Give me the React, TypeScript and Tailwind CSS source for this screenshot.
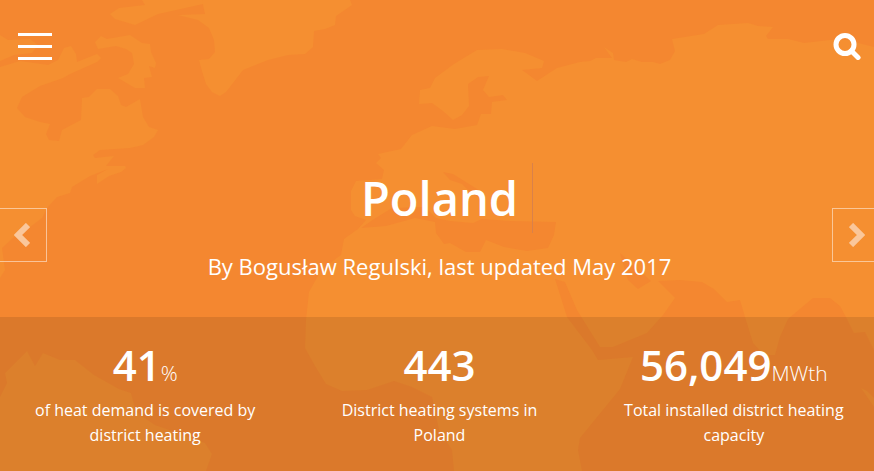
import React from "react";

type Stat = { value: string; unit?: string; label: string };

const stats: Stat[] = [
  { value: "41", unit: "%", label: "of heat demand is covered by district heating" },
  { value: "443", label: "District heating systems in Poland" },
  { value: "56,049", unit: "MWth", label: "Total installed district heating capacity" },
];

function WorldMap() {
  return (
    <svg
      className="absolute inset-0 h-full w-full"
      viewBox="0 0 874 471"
      preserveAspectRatio="xMidYMid slice"
      aria-hidden="true"
    >
      <g fill="#f58f31">
        {/* North America */}
        <path d="M0 67 L20 61 L48 65 L58 60 L64 48 L71 46 L76 54 L77 62 L97 54 L101 58 L97 62 L70 74 L63 78 L40 86 L22 97 L17 108 L25 117 L40 122 L50 124 L46 134 L49 140 L59 141 L62 130 L81 120 L82 98 L89 97 L97 89 L110 89 L118 96 L121 105 L126 107 L140 99 L143 117 L149 127 L158 130 L154 137 L143 145 L130 148 L100 150 L93 155 L95 158 L114 156 L106 166 L125 166 L126 168 L121 172 L109 176 L97 184 L97 175 L108 169 L90 176 L72 187 L70 193 L57 197 L47 208 L42 218 L30 227 L13 238 L2 248 L5 270 L0 278Z" />
        <path d="M0 35 L8 40 L30 39 L38 45 L32 53 L14 55 L0 61Z" />
        <path d="M95 42 L101 36 L107 39 L130 35 L142 43 L150 44 L151 52 L156 63 L155 68 L149 66 L152 77 L144 78 L145 88 L135 88 L118 78 L128 74 L134 64 L132 53 L126 49 L116 46 L98 49Z" />
        <path d="M142 0 L212 0 L203 4 L158 14 L135 25 L115 19 L110 14 L119 8 L145 5Z" />
        {/* Greenland */}
        <path d="M202 0 L350 0 L352 5 L336 16 L335 25 L325 29 L314 31 L313 47 L305 54 L288 55 L268 60 L243 70 L233 83 L226 92 L220 96 L212 92 L206 84 L202 71 L199 60 L209 59 L215 52 L214 40 L209 28 L198 20 L178 15 L205 14Z" />
        {/* Eurasia and Africa */}
        <path d="M874 47 L862 44 L848 40 L830 40 L804 43 L788 39 L768 39 L766 36 L773 27 L758 26 L748 23 L718 25 L704 34 L672 39 L675 51 L670 60 L660 64 L653 62 L642 62 L632 59 L626 62 L614 60 L613 53 L604 47 L612 58 L596 58 L590 61 L580 62 L557 68 L537 81 L522 70 L542 68 L544 61 L525 53 L502 49 L477 50 L454 64 L435 78 L430 88 L420 90 L419 104 L432 103 L443 111 L453 120 L462 115 L469 106 L468 84 L478 77 L489 76 L483 90 L489 97 L503 95 L507 100 L492 102 L491 114 L481 114 L477 125 L455 129 L432 126 L412 135 L401 149 L378 154 L381 158 L376 163 L384 170 L382 179 L356 181 L351 191 L351 210 L355 216 L366 220 L358 229 L344 239 L341 255 L322 269 L309 292 L306 320 L305 348 L315 366 L326 384 L342 391 L367 390 L394 381 L412 387 L432 397 L439 430 L452 450 L454 471 L582 471 L578 450 L580 438 L620 389 L633 357 L598 360 L592 350 L567 317 L555 279 L565 282 L577 310 L600 347 L613 347 L647 333 L663 315 L675 298 L658 281 L680 280 L702 282 L714 289 L727 302 L740 300 L745 317 L753 343 L764 355 L775 355 L780 337 L788 319 L801 308 L813 298 L830 298 L840 306 L847 319 L854 333 L865 332 L874 350Z" />
        {/* South America */}
        <path d="M0 397 L7 383 L5 373 L18 360 L27 351 L35 366 L43 353 L60 360 L75 360 L94 375 L119 389 L131 393 L136 412 L155 425 L178 433 L205 443 L212 454 L206 471 L0 471Z" />
        {/* Sumatra */}
        <path d="M861 388 L867 391 L874 398 L874 407Z" />
      </g>
      <g fill="#f48730">
        {/* Mediterranean, Black Sea and Persian Gulf */}
        <path d="M361 228 L374 219 L392 208 L425 207 L436 218 L450 221 L473 223 L482 219 L510 221 L556 222 L554 235 L548 248 L527 251 L504 247 L486 240 L480 252 L466 252 L450 243 L444 244 L436 233 L435 222 L415 218 L386 226Z" />
        <path d="M443 172 L453 174 L485 194 L485 200 L472 194 L462 184 L450 180Z" />
        <path d="M620 253 L633 265 L651 281 L638 289 L628 280Z" />
      </g>
    </svg>
  );
}

function SliderButton({ direction }: { direction: "Previous" | "Next" }) {
  const previous = direction === "Previous";
  return (
    <button
      type="button"
      aria-label={direction}
      className={
        previous
          ? "mt-6 flex h-[54px] w-[47px] items-center border border-l-0 border-white/50 pl-3.5"
          : "mt-6 flex h-[54px] w-[42px] items-center justify-end border border-r-0 border-white/50 pr-[9px]"
      }
    >
      <svg className="h-6 w-4" viewBox="0 0 16 24" aria-hidden="true">
        <path
          d={previous ? "M14 2 L4 12 L14 22" : "M2 2 L12 12 L2 22"}
          fill="none"
          stroke="#fac79b"
          strokeWidth="6"
        />
      </svg>
    </button>
  );
}

export default function App() {
  return (
    <main className="relative flex min-h-screen flex-col overflow-hidden bg-[#f48730] font-['Open_Sans','Noto_Sans',sans-serif] text-white">
      <WorldMap />
      <header className="relative flex items-start justify-between pt-8 pr-[13px] pl-[18px]">
        <button type="button" aria-label="Open menu" className="flex w-[34px] flex-col gap-[9px] pt-px">
          <span className="h-[3px] w-full bg-white" />
          <span className="h-[3px] w-full bg-white" />
          <span className="h-[3px] w-full bg-white" />
        </button>
        <button type="button" aria-label="Search">
          <svg className="h-7 w-7" viewBox="0 0 28 28" fill="none" stroke="white" aria-hidden="true">
            <circle cx="12" cy="12.5" r="9" strokeWidth="5" />
            <path d="M18.5 19 L25 25.5" strokeWidth="5" strokeLinecap="round" />
          </svg>
        </button>
      </header>

      <section className="relative flex flex-1 items-center justify-between pt-[68px]">
        <SliderButton direction="Previous" />
        <div className="flex flex-col items-center gap-[17px] text-center">
          <h1 className="relative text-[47px] leading-[70px] font-semibold">
            Poland
            <span className="absolute top-0 left-full ml-3.5 h-full w-px bg-[#d9814a]" />
          </h1>
          <p className="text-[22px] leading-8">By Bogusław Regulski, last updated May 2017</p>
        </div>
        <SliderButton direction="Next" />
      </section>

      <section className="relative bg-black/10 pt-[23px] pb-[23px]">
        <dl className="-mr-[7px] -ml-0.5 grid grid-cols-3">
          {stats.map((stat) => (
            <div key={stat.label} className="flex flex-col-reverse items-center px-7 text-center">
              <dt className="text-[16px] leading-[25px]">{stat.label}</dt>
              <dd className="pb-2 text-[42px] leading-[50px] font-semibold">
                {stat.value}
                {stat.unit && <span className="text-[21px] leading-none font-light">{stat.unit}</span>}
              </dd>
            </div>
          ))}
        </dl>
      </section>
    </main>
  );
}
